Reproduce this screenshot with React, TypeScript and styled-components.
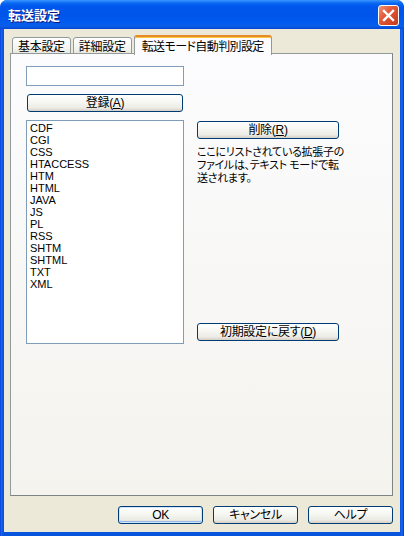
import { createGlobalStyle } from 'styled-components'
import styled from 'styled-components'

const GlobalStyle = createGlobalStyle`
  html, body {
    margin: 0;
    padding: 0;
    background: #ffffff;
  }
  body {
    font-family: "Liberation Sans", "Noto Sans CJK JP", sans-serif;
    font-size: 12px;
    color: #000000;
    font-feature-settings: "palt";
  }
`

const Window = styled.div`
  width: 404px;
  height: 536px;
  box-sizing: border-box;
  display: flex;
  flex-direction: column;
  padding: 0 4px 4px;
  border-radius: 7px 7px 0 0;
  background: linear-gradient(to right, #0831d9 0, #166aee 1px, #0855dd 3px, #0855dd 400px, #166aee 402px, #0831d9 404px);
  overflow: hidden;
`

const TitleBar = styled.div`
  height: 29px;
  margin: 0 -4px;
  padding: 0 5px 0 8px;
  display: flex;
  align-items: center;
  justify-content: space-between;
  border-radius: 7px 7px 0 0;
  background: linear-gradient(
    to bottom,
    #3d95ff 0,
    #0a6af3 3px,
    #0058ee 6px,
    #0054e9 14px,
    #005aef 22px,
    #0a5ee8 26px,
    #0446d6 29px
  );
`

const Title = styled.span`
  font-family: "Noto Sans CJK JP", sans-serif;
  font-size: 13px;
  font-weight: 700;
  color: #ffffff;
  text-shadow: 1px 1px 0 #0a1883;
  line-height: 16px;
  padding-top: 1px;
`

const CloseButton = styled.div`
  width: 21px;
  height: 21px;
  box-sizing: border-box;
  border: 1px solid #ffffff;
  border-radius: 3px;
  background: linear-gradient(135deg, #f0947a 0%, #e2583a 40%, #c8381a 100%);
  display: flex;
  align-items: center;
  justify-content: center;
  margin-top: 1px;
`

const Client = styled.div`
  flex: 1;
  display: flex;
  flex-direction: column;
  background: #ece9d8;
  padding: 6px 0 0 6px;
  box-sizing: border-box;
`

const TabStrip = styled.div`
  display: flex;
  align-items: flex-end;
  height: 19px;
  padding-left: 2px;
  gap: 2px;
  position: relative;
  z-index: 1;
`

const Tab = styled.div<{ $active?: boolean }>`
  height: ${(p) => (p.$active ? '20px' : '17px')};
  margin-bottom: ${(p) => (p.$active ? '-1px' : '0')};
  padding: 0 ${(p) => (p.$active ? '7px' : '5px')};
  box-sizing: border-box;
  display: flex;
  align-items: center;
  font-family: "Noto Sans CJK JP", sans-serif;
  font-size: 12px;
  letter-spacing: ${(p) => (p.$active ? '-0.6px' : '-0.3px')};
  line-height: 14px;
  border: 1px solid #919b9c;
  border-bottom: ${(p) => (p.$active ? 'none' : '1px solid #919b9c')};
  border-top: ${(p) => (p.$active ? '2px solid #e68b2c' : '1px solid #919b9c')};
  border-radius: 3px 3px 0 0;
  background: ${(p) =>
    p.$active ? '#fcfcfe' : 'linear-gradient(to bottom, #ffffff, #f3f3ef 70%, #e9e7dc)'};
  box-shadow: ${(p) => (p.$active ? 'inset 0 1px 0 #ffc83c' : 'none')};
`

const Panel = styled.div`
  width: 383px;
  height: 443px;
  margin-top: -1px;
  box-sizing: border-box;
  border: 1px solid #919b9c;
  border-right-color: #7d8485;
  border-bottom-color: #7d8485;
  background: linear-gradient(to bottom, #fcfcfe, #f4f3ee);
  padding: 12px 0 0 15px;
  display: flex;
  gap: 13px;
`

const LeftColumn = styled.div`
  width: 158px;
  display: flex;
  flex-direction: column;
`

const RightColumn = styled.div`
  width: 142px;
  height: 278px;
  display: flex;
  flex-direction: column;
  padding: 55px 0 3px;
  box-sizing: border-box;
`

const TextBox = styled.input`
  width: 158px;
  height: 20px;
  box-sizing: border-box;
  border: 1px solid #7f9db9;
  background: #ffffff;
  margin: 0;
  outline: none;
`

const Button = styled.button<{ $default?: boolean; $width?: number }>`
  width: ${(p) => (p.$width ? `${p.$width}px` : '100%')};
  height: 18px;
  margin: 0;
  padding: 0;
  box-sizing: border-box;
  border: 1px solid #003c74;
  border-radius: 3px;
  font-family: "Liberation Sans", "Noto Sans CJK JP", sans-serif;
  font-feature-settings: "palt";
  font-size: 12px;
  letter-spacing: -0.3px;
  line-height: 14px;
  color: #000000;
  background: linear-gradient(to bottom, #ffffff 0%, #f6f6f2 45%, #ecebe5 80%, #d6d0c5 100%);
  box-shadow: ${(p) =>
    p.$default ? 'inset 0 0 0 1px #cee7ff, inset 0 -1px 0 1px #98b8ea' : 'none'};
  u {
    text-decoration: underline;
  }
`

const RegisterButton = styled(Button)`
  width: 156px;
  margin: 8px 1px 0;
`

const ListBox = styled.ul`
  list-style: none;
  margin: 8px 0 0;
  padding: 1px 3px;
  width: 158px;
  height: 224px;
  box-sizing: border-box;
  border: 1px solid #7f9db9;
  background: #ffffff;
  overflow: hidden;
`

const ListItem = styled.li`
  font-size: 11px;
  line-height: 12px;
  height: 12px;
`

const Note = styled.p`
  margin: 6px 0 0;
  font-family: "Noto Sans CJK JP", sans-serif;
  font-size: 11px;
  line-height: 13px;
  white-space: nowrap;
  letter-spacing: -0.3px;
`

const Spacer = styled.div`
  flex: 1;
`

const ButtonRow = styled.div`
  display: flex;
  justify-content: flex-end;
  gap: 10px;
  padding: 10px 7px 0 0;
`

const extensions = ['CDF', 'CGI', 'CSS', 'HTACCESS', 'HTM', 'HTML', 'JAVA', 'JS', 'PL', 'RSS', 'SHTM', 'SHTML', 'TXT', 'XML']

export default function App() {
  return (
    <>
      <GlobalStyle />
      <Window>
        <TitleBar>
          <Title>転送設定</Title>
          <CloseButton>
            <svg width="13" height="13" viewBox="0 0 13 13">
              <path d="M2 2 L11 11 M11 2 L2 11" stroke="#ffffff" strokeWidth="2.4" strokeLinecap="square" />
            </svg>
          </CloseButton>
        </TitleBar>
        <Client>
          <TabStrip>
            <Tab>基本設定</Tab>
            <Tab>詳細設定</Tab>
            <Tab $active>転送モード自動判別設定</Tab>
          </TabStrip>
          <Panel>
            <LeftColumn>
              <TextBox />
              <RegisterButton>
                登録(<u>A</u>)
              </RegisterButton>
              <ListBox>
                {extensions.map((ext) => (
                  <ListItem key={ext}>{ext}</ListItem>
                ))}
              </ListBox>
            </LeftColumn>
            <RightColumn>
              <Button>
                削除(<u>R</u>)
              </Button>
              <Note>
                ここにリストされている拡張子の
                <br />
                ファイルは、テキスト モードで転
                <br />
                送されます。
              </Note>
              <Spacer />
              <Button>
                初期設定に戻す(<u>D</u>)
              </Button>
            </RightColumn>
          </Panel>
          <ButtonRow>
            <Button $default $width={85}>OK</Button>
            <Button $width={85}>キャンセル</Button>
            <Button $width={85}>ヘルプ</Button>
          </ButtonRow>
        </Client>
      </Window>
    </>
  )
}
